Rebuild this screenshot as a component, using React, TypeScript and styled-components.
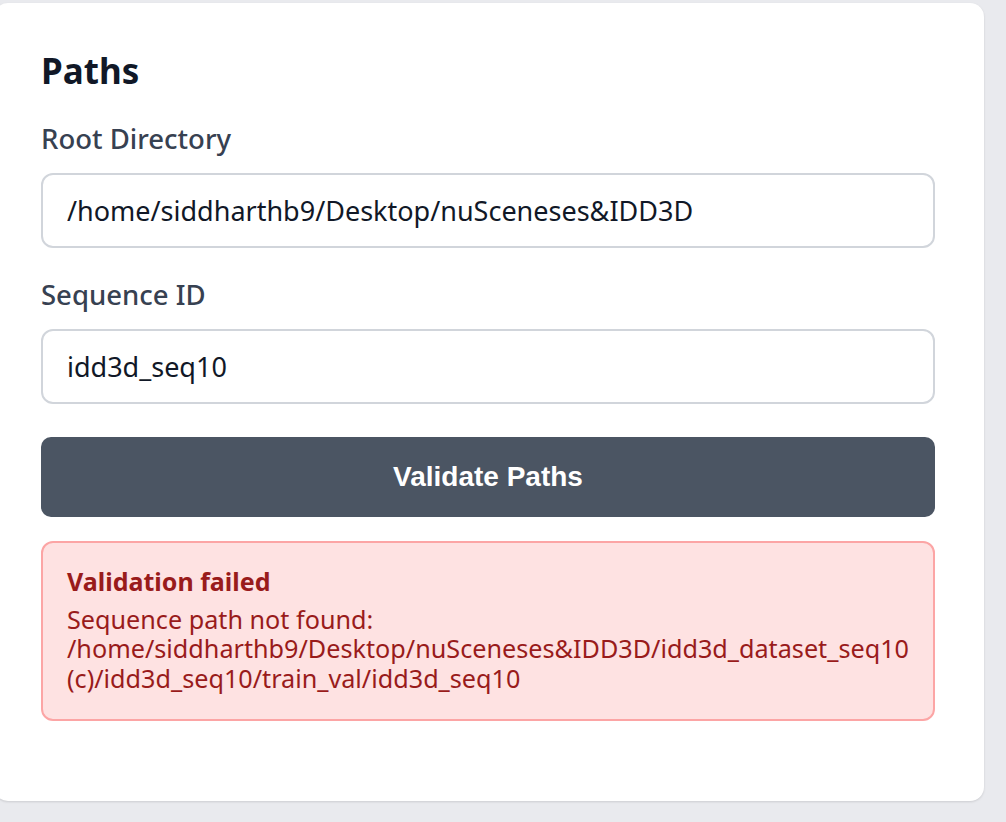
import React from "react";
import styled, { createGlobalStyle } from "styled-components";

const Global = createGlobalStyle`
  html, body { margin: 0; padding: 0; background: #e9eaee; }
  body { font-family: "Noto Sans", "Open Sans", sans-serif; }
  * { box-sizing: border-box; }
`;

const Page = styled.div`
  width: 1006px;
  height: 822px;
  padding: 3px 22px 0 0;
  overflow: hidden;
`;

const Card = styled.section`
  margin-left: -6px;
  background: #ffffff;
  border-radius: 14px;
  box-shadow: 0 1px 3px rgba(0, 0, 0, 0.08), 0 1px 2px rgba(0, 0, 0, 0.05);
  padding: 46px 49px 0 47px;
  height: 798px;
  display: flex;
  flex-direction: column;
`;

const Title = styled.h2`
  margin: 0 0 29px;
  font-size: 35px;
  line-height: 44px;
  font-weight: 700;
  color: #111827;
`;

const Field = styled.div`
  display: flex;
  flex-direction: column;
  gap: 17px;
  & + & {
    margin-top: 30px;
  }
`;

const Label = styled.label`
  font-size: 27.5px;
  line-height: 34px;
  font-weight: 500;
  color: #374151;
`;

const Input = styled.input`
  height: 75px;
  border: 2px solid #d1d5db;
  border-radius: 12px;
  padding: 0 24px;
  font-family: "Noto Sans", sans-serif;
  font-size: 27px;
  color: #111827;
  background: #fff;
  outline: none;
`;

const Button = styled.button`
  margin-top: 33px;
  height: 80px;
  flex-shrink: 0;
  border: none;
  border-radius: 10px;
  background: #4b5563;
  color: #ffffff;
  font-family: "Liberation Sans", Arial, sans-serif;
  font-weight: 700;
  font-size: 28px;
  cursor: pointer;
`;

const Alert = styled.div`
  margin-top: 24px;
  background: #fee2e2;
  border: 2px solid #fca5a5;
  border-radius: 12px;
  padding: 23.5px 24px 25.5px;
  color: #991b1b;
`;

const AlertTitle = styled.div`
  font-size: 25px;
  line-height: 29.5px;
  font-weight: 700;
  margin-bottom: 8.5px;
`;

const AlertBody = styled.div`
  font-size: 25.2px;
  line-height: 29.5px;
`;

export default function App() {
  return (
    <>
      <Global />
      <Page>
        <Card>
          <Title>Paths</Title>
          <Field>
            <Label>Root Directory</Label>
            <Input defaultValue="/home/siddharthb9/Desktop/nuSceneses&IDD3D" />
          </Field>
          <Field>
            <Label>Sequence ID</Label>
            <Input defaultValue="idd3d_seq10" />
          </Field>
          <Button>Validate Paths</Button>
          <Alert>
            <AlertTitle>Validation failed</AlertTitle>
            <AlertBody>
              Sequence path not found: /home/siddharthb9/Desktop/nuSceneses&amp;IDD3D/idd3d_dataset_seq10 (c)/idd3d_seq10/train_val/idd3d_seq10
            </AlertBody>
          </Alert>
        </Card>
      </Page>
    </>
  );
}
